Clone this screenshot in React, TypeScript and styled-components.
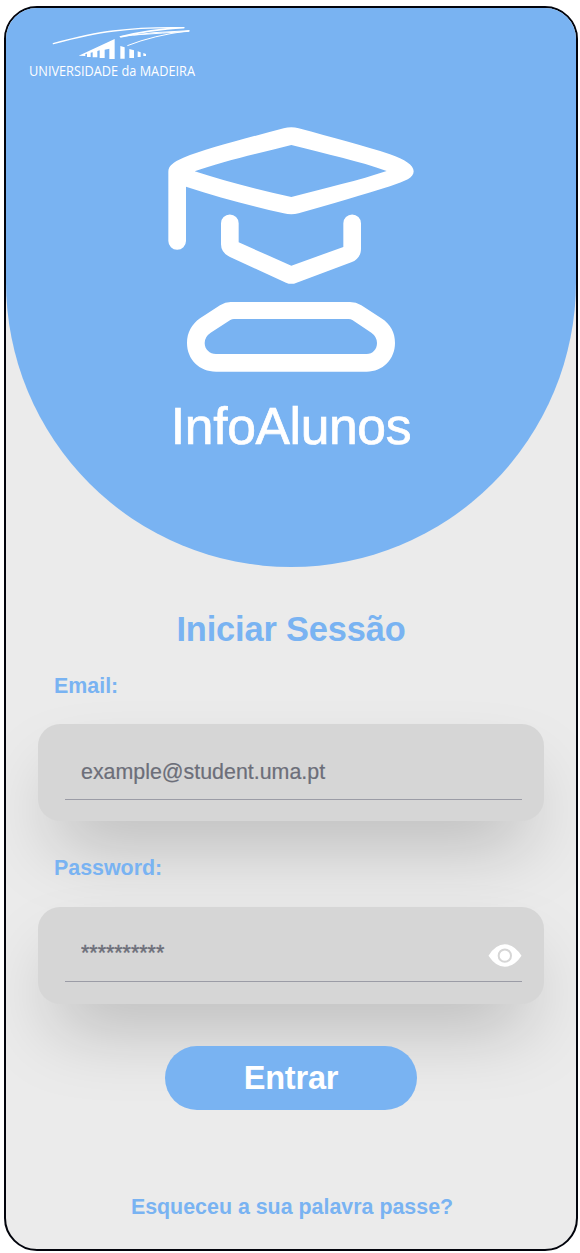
import React from 'react';
import styled, { createGlobalStyle } from 'styled-components';

const blue = '#79b3f2';

const GlobalStyle = createGlobalStyle`
  * { box-sizing: border-box; }
  body { margin: 0; background: #fff; font-family: "Liberation Sans", Arial, sans-serif; }
`;

const Phone = styled.main`
  width: 574px;
  height: 1245px;
  margin: 6px 0 0 4px;
  border: 2px solid #02040c;
  border-radius: 33px;
  background: #ebebeb;
  overflow: hidden;
  display: flex;
  flex-direction: column;
`;

const Hero = styled.header`
  height: 559px;
  flex: none;
  background: ${blue};
  border-radius: 0 0 285px 285px;
  display: flex;
  flex-direction: column;
  align-items: center;
`;

const UniversityLogo = styled.svg`
  width: 172px;
  height: 64px;
  margin: 14px 0 0 20px;
  align-self: flex-start;
  flex: none;
  overflow: visible;
`;

const GraduateIcon = styled.svg`
  width: 280px;
  height: 280px;
  margin: 24px 2px 0 0;
  flex: none;
`;

const AppName = styled.h1`
  margin: 6px 0 0;
  font-size: 51.6px;
  font-weight: 400;
  line-height: 60px;
  letter-spacing: -0.35px;
  color: #fff;
  -webkit-text-stroke: 0.7px #fff;
`;

const LoginForm = styled.form`
  display: flex;
  flex-direction: column;
  align-items: center;
  padding: 42px 32px 0;
`;

const Title = styled.h2`
  margin: 0;
  font-size: 34.4px;
  line-height: 40px;
  letter-spacing: -0.15px;
  color: ${blue};
`;

const Label = styled.label<{ $gap: number }>`
  align-self: flex-start;
  margin: ${(p) => p.$gap}px 0 0 16px;
  font-size: 21.4px;
  font-weight: 700;
  line-height: 26px;
  color: ${blue};
`;

const FieldCard = styled.div<{ $gap: number }>`
  width: 506px;
  height: 97px;
  margin-top: ${(p) => p.$gap}px;
  padding: 20px 22px 0 27px;
  border-radius: 22px;
  background: #d6d6d6;
  box-shadow: 0 37px 75px -18px rgba(0, 0, 0, 0.25);
`;

const FieldLine = styled.div<{ $height: number }>`
  height: ${(p) => p.$height}px;
  border-bottom: 1px solid #9b9ca6;
  display: flex;
  align-items: center;
`;

const Input = styled.input<{ $masked?: boolean }>`
  flex: 1;
  min-width: 0;
  height: 54px;
  padding: ${(p) => (p.$masked ? '0 16px 1px' : '2px 16px 0')};
  border: 0;
  outline: 0;
  background: transparent;
  font: 21.4px "Liberation Sans", Arial, sans-serif;
  color: #6c6e79;
  -webkit-text-stroke: ${(p) => (p.$masked ? '0.4px' : '0.2px')} #6c6e79;
  &::placeholder { color: #6c6e79; opacity: 1; }
`;

const EyeIcon = styled.svg`
  width: 34px;
  height: 23px;
  margin-top: 3px;
  flex: none;
`;

const SubmitButton = styled.button`
  width: 252px;
  height: 64px;
  margin-top: 42px;
  border: 0;
  border-radius: 32px;
  background: ${blue};
  color: #fff;
  font: 700 32.5px "Liberation Sans", Arial, sans-serif;
  letter-spacing: -0.2px;
`;

const ForgotLink = styled.a`
  margin: 84px 0 0 2px;
  font-size: 21.4px;
  font-weight: 700;
  line-height: 26px;
  color: ${blue};
`;

const Logo = () => (
  <UniversityLogo viewBox="78 66 516 192" fill="#fff">
    <path d="M160 131 Q270 101 340 93 Q430 81 552 83" fill="none" stroke="#fff" strokeWidth="4" strokeLinecap="round" />
    <path d="M358 109 Q450 85 552 81 L552 85 Q450 92 362 113Z" />
    <path d="M360 110 Q460 95 568 92 Q460 106 382 137 M400 105 Q490 99 568 94" fill="none" stroke="#fff" strokeWidth="3" />
    <path d="M236 167 L344 117 V177 H328 V146 L314 149 V174 H299 V151 L292 153 V172 H278 V157 L272 158 V171 H261 V161 L256 162 V168Z" />
    <path d="M361 138 L374 142 V176 H361Z M388 147 L402 151 V174 H388Z M413 154 L422 157 V171 H413Z M430 159 L438 162 V168 H430Z" />
    <text x="87" y="227" fontFamily="Open Sans, sans-serif" fontSize="46" textLength="498" lengthAdjust="spacingAndGlyphs">UNIVERSIDADE da MADEIRA</text>
  </UniversityLogo>
);

const Graduate = () => (
  <GraduateIcon viewBox="0 0 840 840" fill="#fff" fillRule="evenodd">
    <path d="M55 185 C55 168 68 157 100 143 C165 117 275 88 401 55 Q424 48 446 55 C545 82 645 108 720 133 C765 149 791 165 791 184 C791 204 768 212 720 229 C645 252 545 282 446 310 Q424 316 401 310 C305 288 205 262 108 230 V393 A26.5 26.5 0 0 1 55 393Z M134 184 C220 213 320 237 424 261 C525 235 630 210 710 183 C630 154 530 132 424 105 C320 131 215 155 134 184Z" />
    <path d="M213 340 A26.5 26.5 0 0 1 266 340 V397 L424 467 L580 411 V340 A26.5 26.5 0 0 1 633 340 V416 C633 436 622 450 604 457 L440 518 Q424 525 408 518 L240 441 Q213 428 213 403Z" />
    <path d="M242 576 H600 Q618 576 634 586 L694 625 C722 643 735 668 735 699 C735 748 698 785 650 785 H198 C148 785 111 748 111 699 C111 668 125 643 150 625 L210 586 Q226 576 242 576Z M252 627 Q246 627 241 630 L182 668 Q164 680 164 699 C164 718 179 732 198 732 H650 C668 732 681 718 681 699 Q681 680 664 668 L607 630 Q602 627 596 627Z" />
  </GraduateIcon>
);

const Eye = () => (
  <EyeIcon viewBox="54 56 99 69">
    <path d="M54 91 Q76 57 103 57 Q131 57 153 91 Q131 124 103 124 Q76 124 54 91Z" fill="#fff" />
    <circle cx="103" cy="91" r="18.5" fill="none" stroke="#d6d6d6" strokeWidth="6" />
  </EyeIcon>
);

export default function App() {
  return (
    <>
      <GlobalStyle />
      <Phone>
        <Hero>
          <Logo />
          <Graduate />
          <AppName>InfoAlunos</AppName>
        </Hero>
        <LoginForm onSubmit={(e) => e.preventDefault()}>
          <Title>Iniciar Sessão</Title>
          <Label $gap={24} htmlFor="email">Email:</Label>
          <FieldCard $gap={25}>
            <FieldLine $height={56}>
              <Input id="email" type="email" placeholder="example@student.uma.pt" />
            </FieldLine>
          </FieldCard>
          <Label $gap={34} htmlFor="password">Password:</Label>
          <FieldCard $gap={26}>
            <FieldLine $height={55}>
              <Input id="password" type="password" placeholder="**********" $masked />
              <Eye />
            </FieldLine>
          </FieldCard>
          <SubmitButton type="submit">Entrar</SubmitButton>
          <ForgotLink>Esqueceu a sua palavra passe?</ForgotLink>
        </LoginForm>
      </Phone>
    </>
  );
}
